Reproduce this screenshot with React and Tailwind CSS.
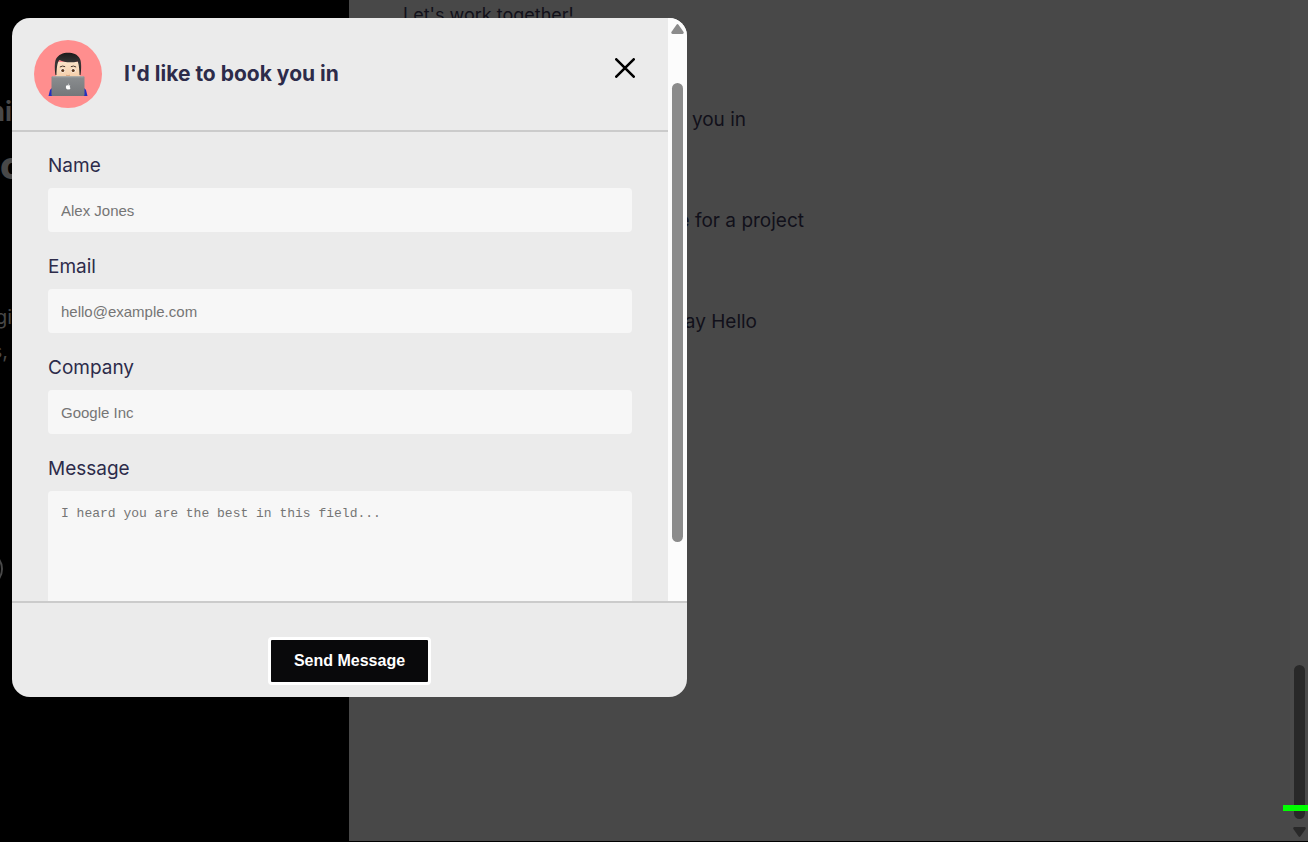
import React from "react";

function Avatar() {
  return (
    <svg viewBox="0 0 68 68" className="size-[68px] shrink-0" aria-hidden="true">
      <defs>
        <linearGradient id="face" x1="0" y1="0" x2="0" y2="1">
          <stop offset="0" stopColor="#fbe3c8" />
          <stop offset="1" stopColor="#f3c59c" />
        </linearGradient>
        <linearGradient id="hair" x1="0" y1="0" x2="0" y2="1">
          <stop offset="0" stopColor="#1d1b1b" />
          <stop offset="0.5" stopColor="#3b3838" />
          <stop offset="1" stopColor="#1b1919" />
        </linearGradient>
        <linearGradient id="laptop" x1="0" y1="0" x2="0" y2="1">
          <stop offset="0" stopColor="#8b8e90" />
          <stop offset="1" stopColor="#74777a" />
        </linearGradient>
      </defs>
      <circle cx="34" cy="34" r="34" fill="#ff8e8e" />
      <path d="M14.5 56 L16 50 Q17 48 19 48 H49 Q51 48 52 50 L53.5 56 Z" fill="#2530bd" />
      <path d="M22 22 H46 V33 Q46 44 34 44 Q22 44 22 33 Z" fill="url(#face)" />
      <path d="M21.500 35 C20.500 29 20.500 22 22 19 C24.500 14.500 29 12.700 34 12.700 C39 12.700 43.500 14 46 19 C47.500 22 47.500 29 46.500 35 L45.600 35 C45.300 30 45.300 26.500 43.800 21.500 C37 23 30 22.500 25.500 20 C23 22.500 22.700 29 22.400 35 Z" fill="url(#hair)" />
      <path d="M26.200 26.800 Q28.500 25.300 30.800 26.500 M37.200 26.500 Q39.500 25.300 41.800 26.800" fill="none" stroke="#4a3a30" strokeWidth="1" strokeLinecap="round" />
      <ellipse cx="28.700" cy="30.500" rx="2.300" ry="2" fill="#fff" />
      <ellipse cx="39.300" cy="30.500" rx="2.300" ry="2" fill="#fff" />
      <circle cx="28.800" cy="30.500" r="1.600" fill="#5b3419" />
      <circle cx="39.200" cy="30.500" r="1.600" fill="#5b3419" />
      <path d="M32 35.200 Q34 36.300 36 35.200" fill="none" stroke="#dca67e" strokeWidth="1" />
      <rect x="17.500" y="36.300" width="33" height="19.700" rx="1.200" fill="url(#laptop)" />
      <path d="M18.500 36.800 H49.500" stroke="#aeb1b3" strokeWidth="0.800" />
      <path d="M34 45.500 C35 44.900 36 45.200 36.300 45.700 C35.500 46.500 35.600 47.500 36.500 48 C36 49.300 35.200 49.800 34.200 49.300 C33 49.800 32 48.800 31.900 47.200 C31.900 45.500 33 45 34 45.500 Z M34 44.900 Q34 43.800 35 43.500 Q35 44.600 34 44.900 Z" fill="#fff" />
    </svg>
  );
}

const fields = [
  { id: "name", label: "Name", placeholder: "Alex Jones", type: "text" },
  { id: "email", label: "Email", placeholder: "hello@example.com", type: "email" },
  { id: "company", label: "Company", placeholder: "Google Inc", type: "text" },
];

function Dialog() {
  return (
    <form
      role="dialog"
      aria-labelledby="dialog-title"
      onSubmit={(e) => e.preventDefault()}
      className="absolute top-[18px] left-3 flex max-h-[679px] w-[675px] flex-col overflow-hidden rounded-[18px] bg-[#ebebeb]"
    >
      <div className="flex min-h-0 flex-1">
        <div className="min-w-0 flex-1 overflow-hidden">
          <header className="flex items-center border-b-2 border-[#cbcbcb] p-[22px]">
            <Avatar />
            <h2 id="dialog-title" className="ml-[22px] flex-1 text-[21px] leading-8 font-bold text-[#2d2b4a]">
              I'd like to book you in
            </h2>
            <button type="button" aria-label="Close" className="mr-[3px] mb-3 p-2">
              <svg viewBox="0 0 20 20" className="size-5" fill="none" stroke="#000" strokeWidth="2.6" strokeLinecap="round">
                <path d="M1.300 1.300 L18.700 18.700 M18.700 1.300 L1.300 18.700" />
              </svg>
            </button>
          </header>
          <div className="flex flex-col gap-5 px-9 pt-[19px]">
            {fields.map((f) => (
              <div key={f.id} className="flex flex-col gap-[7px]">
                <label htmlFor={f.id} className="text-[19px] leading-[30px] text-[#2d2b4a]">
                  {f.label}
                </label>
                <input
                  id={f.id}
                  type={f.type}
                  placeholder={f.placeholder}
                  className="h-11 w-full rounded bg-[#f7f7f7] px-[13px] font-['Liberation_Sans',sans-serif] text-[15px] placeholder:text-[#757575]"
                />
              </div>
            ))}
            <div className="flex flex-col gap-[7px]">
              <label htmlFor="message" className="text-[19px] leading-[30px] text-[#2d2b4a]">
                Message
              </label>
              <textarea
                id="message"
                placeholder="I heard you are the best in this field..."
                className="h-[200px] w-full resize-none rounded bg-[#f7f7f7] px-[13px] py-[14px] font-['Liberation_Mono',monospace] text-[13px] leading-[18px] placeholder:text-[#757575]"
              />
            </div>
          </div>
        </div>
        <div className="flex w-[19px] shrink-0 flex-col items-center bg-[#fcfcfc] pt-[6px]" aria-hidden="true">
          <svg viewBox="0 0 13 10" className="h-[10px] w-[13px]" fill="#8b8b8b">
            <path d="M5.500 0.700 Q6.500 -0.500 7.500 0.700 L12.600 8 Q13.200 9.800 11.500 10 H1.500 Q-0.200 9.800 0.400 8 Z" />
          </svg>
          <div className="mt-[49px] h-[459px] w-[11px] rounded-full bg-[#8b8b8b]" />
        </div>
      </div>
      <footer className="flex justify-center border-t-2 border-[#cbcbcb] pt-[34px] pb-3">
        <button
          type="submit"
          className="rounded border-3 border-white bg-[#09090b] px-[23px] py-[9px] font-['Liberation_Sans',sans-serif] text-base font-bold text-white"
        >
          Send Message
        </button>
      </footer>
    </form>
  );
}

export default function App() {
  return (
    <div className="relative flex h-screen overflow-hidden bg-black pb-px font-['Inter',sans-serif]">
      <aside className="w-[349px] shrink-0 overflow-hidden text-[#484848]">
        <div className="flex w-3 flex-col items-end pt-[92px] whitespace-nowrap">
          <p className="text-[26px] leading-10 font-bold">ni</p>
          <p className="mt-[9px] self-start text-[38px] leading-[48px] font-extrabold">o</p>
          <p className="mt-[111px] text-[20px] leading-[34px]">gi</p>
          <p className="mr-1 text-[20px] leading-[34px]">s,</p>
        </div>
        <div className="mt-[183px] -ml-[33px] size-9 rounded-full border-2 border-[#484848]" />
      </aside>
      <main className="min-w-0 flex-1 bg-[#484848] pl-[54px] text-[19px] leading-[30px] text-[#11101a]">
        <h1 className="text-[18px]">Let's work together!</h1>
        <ul className="flex flex-col gap-[71px] pt-[75px] whitespace-nowrap">
          <li className="w-[343px] text-right">I'd like to book you in</li>
          <li className="w-[401px] text-right">Get a quote for a project</li>
          <li className="w-[354px] text-right">Just say Hello</li>
        </ul>
      </main>
      <div className="flex w-[18px] shrink-0 flex-col items-center justify-end bg-[#4a4a4a] pb-1" aria-hidden="true">
        <div className="mb-2 h-[154px] w-[11px] rounded-full bg-[#292929]" />
        <svg viewBox="0 0 13 10" className="h-[10px] w-[13px]" fill="#292929">
          <path d="M5.500 9.300 Q6.500 10.500 7.500 9.300 L12.600 2 Q13.200 0.200 11.500 0 H1.500 Q-0.200 0.200 0.400 2 Z" />
        </svg>
      </div>
      <div className="absolute right-0 bottom-[31px] h-[6px] w-[25px] bg-[#00ff00]" />
      <Dialog />
    </div>
  );
}
